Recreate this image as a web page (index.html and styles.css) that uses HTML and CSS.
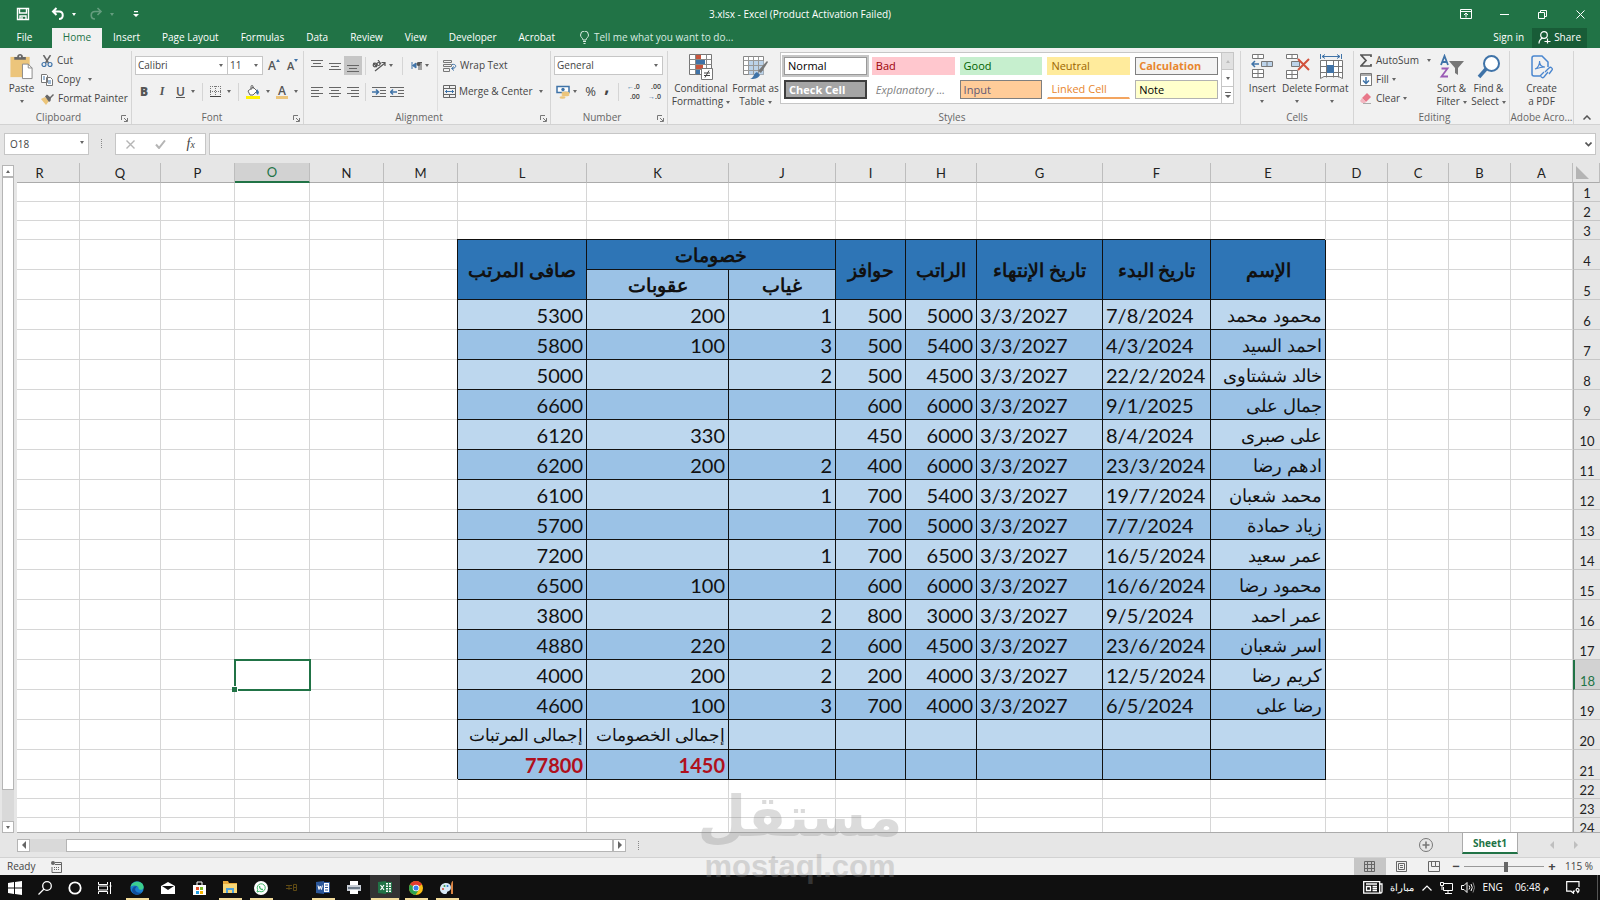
FILE: index.html
```html
<!DOCTYPE html>
<html lang="en">
  <head>
    <meta charset="UTF-8" />
    <meta name="viewport" content="width=device-width, initial-scale=1.0" />
    <title>3.xlsx - Excel</title>
    <link rel="stylesheet" href="styles.css">
  </head>
  <body>
    <!-- Title bar -->
    <header class="titlebar">
      <div class="quick">
        <button aria-label="Save"><svg width="14" height="14" viewBox="0 0 14 14" fill="none" stroke="#fff" stroke-width="1.4"><path d="M1.5 1.5h11v11h-11zM3.5 1.5v4.500h7V1.500M4 12.500V9h6v3.500M6 10v2.500"/></svg></button>
        <button class="undo" aria-label="Undo"><svg width="14" height="14" viewBox="0 0 14 14" fill="none" stroke="#fff" stroke-width="2"><path d="M5.500 1L2 4.500L5.500 8M2.500 4.500H8c5 0 5 7.500 0 7.500"/></svg><i class="caret"></i></button>
        <button class="redo" aria-label="Redo"><svg width="14" height="14" viewBox="0 0 14 14" fill="none" stroke="#fff" stroke-width="1.600"><path d="M8.500 1L12 4.500L8.500 8M11.500 4.500H6c-5 0-5 7.500 0 7.500"/></svg><i class="caret"></i></button>
        <button class="customize" aria-label="Customize toolbar"><svg width="6" height="7" viewBox="0 0 6 7"><path d="M1 0h4v1.200H1zM0 3h6L3 6z" fill="#fff"/></svg></button>
      </div>
      <h1>3.xlsx - Excel (Product Activation Failed)</h1>
      <div class="window-buttons">
        <button aria-label="Ribbon display options"><svg width="12" height="10" viewBox="0 0 12 10" fill="none" stroke="#fff"><path d="M.5.5h11v9H.5zM.5 2.500h11M6 8.500V4M4 6l2-2l2 2"/></svg></button>
        <button aria-label="Minimize"><svg width="9" height="9" viewBox="0 0 9 9" stroke="#fff"><path d="M0 4.500h9"/></svg></button>
        <button aria-label="Restore"><svg width="9" height="9" viewBox="0 0 9 9" fill="none" stroke="#fff"><path d="M.5 2.500h6v6h-6zM2.500 2V.5h6v6H7"/></svg></button>
        <button aria-label="Close"><svg width="9" height="9" viewBox="0 0 9 9" stroke="#fff"><path d="M.5.5l8 8M8.500.5l-8 8"/></svg></button>
      </div>
    </header>

    <!-- Ribbon tabs -->
    <nav class="tabs">
      <a href="#" class="file">File</a>
      <a href="#" class="active">Home</a>
      <a href="#">Insert</a>
      <a href="#">Page Layout</a>
      <a href="#">Formulas</a>
      <a href="#">Data</a>
      <a href="#">Review</a>
      <a href="#">View</a>
      <a href="#">Developer</a>
      <a href="#">Acrobat</a>
      <a href="#" class="tell"><svg width="9" height="13" viewBox="0 0 9 13" fill="none" stroke="#d8ebe0"><path d="M3 9c0-2-2.500-2.500-2.500-5a4 4 0 0 1 8 0C8.500 6.500 6 7 6 9zM3 10.500h3M3.500 12.500h2"/></svg>Tell me what you want to do...</a>
      <a href="#" class="signin">Sign in</a>
      <a href="#" class="share"><svg width="13" height="13" viewBox="0 0 13 13" fill="none" stroke="#fff" stroke-width="1.200"><circle cx="6" cy="4" r="3.300"/><path d="M1 12.500c0-3 1.500-4.500 3.500-5.500M6.500 10.500h6M9.500 7.500v5"/></svg>Share</a>
    </nav>

    <!-- Ribbon -->
    <section class="ribbon">
      <div class="group clipboard">
        <div class="tools">
          <button class="big paste"><svg width="25" height="27" viewBox="0 0 25 27"><path d="M1 3h20v21H1z" fill="#ecc57b"/><path d="M5 6V3h3c0-4 6-4 6 0h3v3z" fill="#666"/><circle cx="11" cy="2.500" r="1" fill="#f1f1f1"/><path d="M13.500 10.500h6l4 4v11h-10z" fill="#fff" stroke="#888"/><path d="M19.500 10.500v4h4" fill="none" stroke="#888"/></svg>Paste<i class="caret"></i></button>
          <div class="stack">
            <button><svg width="12" height="12" viewBox="0 0 12 12" fill="none"><path d="M2.500 0l5 8M9.500 0l-5 8" stroke="#666" stroke-width="1.500"/><circle cx="3" cy="9.500" r="2" stroke="#3f73a8" stroke-width="1.200"/><circle cx="9" cy="9.500" r="2" stroke="#3f73a8" stroke-width="1.200"/></svg>Cut</button>
            <button><svg width="12" height="12" viewBox="0 0 12 12" fill="#fff" stroke="#777"><path d="M.5.5h5l1 1v7h-6zM5.500 3.500h4l2 2v6h-6z"/><path d="M2 3h2M2 5h2M7 7h3M7 9h3" stroke="#3f73a8"/></svg>Copy<i class="caret wide"></i></button>
            <button><svg width="13" height="12" viewBox="0 0 13 12"><path d="M0 6l4-2l4 4l-3 4z" fill="#ecc57b"/><path d="M4 3.500l2-2l3 2.500l3-3l1 1l-3 3l-.500 3l-1.500 1z" fill="#666"/></svg>Format Painter</button>
          </div>
        </div>
        <div class="caption">Clipboard<svg class="launch"><use href="#launch"/></svg></div>
      </div>

      <div class="group font">
        <div class="tools column">
          <div class="line">
            <label class="combo font-name"><select aria-label="Font"><option>Calibri</option></select></label><label class="combo font-size"><select aria-label="Font size"><option>11</option></select></label>
            <button class="letter grow" aria-label="Increase font size">A<i class="up"></i></button>
            <button class="letter shrink" aria-label="Decrease font size">A<i class="down"></i></button>
          </div>
          <div class="line format">
            <button class="letter style"><b>B</b></button>
            <button class="letter style"><em>I</em></button>
            <button class="letter underline"><u>U</u><i class="caret"></i></button>
            <i class="sep"></i>
            <button aria-label="Borders"><svg width="11" height="11" viewBox="0 0 11 11" fill="none" stroke="#777"><path d="M.5 0v10M10.500 0v10M0 .5h11M5.500 0v10M0 5.500h11" stroke-dasharray="1 1"/><path d="M0 10.500h11" stroke="#444"/></svg><i class="caret"></i></button>
            <i class="sep"></i>
            <button aria-label="Fill color"><svg width="14" height="14" viewBox="0 0 14 14"><path d="M2 6l5-4l4 4l-4 4H4z" fill="#fff" stroke="#666"/><path d="M5 5V1.500a1 1 0 0 1 2 0V4" fill="none" stroke="#666"/><path d="M11 4l2 3l-1 3l-2-2z" fill="#3f73a8"/><path d="M0 11h14v3H0z" fill="#fff200"/></svg><i class="caret"></i></button>
            <button class="letter fontcolor" aria-label="Font color"><span>A</span><i class="caret"></i></button>
          </div>
        </div>
        <div class="caption">Font<svg class="launch"><use href="#launch"/></svg></div>
      </div>

      <div class="group alignment">
        <div class="tools">
          <div class="column aligns">
            <div class="line">
              <button aria-label="Top align"><svg class="bars"><path d="M0 .5h12M2 3.500h8M0 6.500h12"/></svg></button>
              <button aria-label="Middle align"><svg class="bars"><path d="M0 3.500h12M2 6.500h8M0 9.500h12"/></svg></button>
              <button class="pressed" aria-label="Bottom align"><svg class="bars"><path d="M0 5.500h12M2 8.500h8M0 11.500h12"/></svg></button>
              <i class="sep"></i>
              <button class="wide" aria-label="Orientation"><svg width="14" height="12" viewBox="0 0 14 12" fill="none" stroke="#555" stroke-width="1.200"><path d="M3 11L13 3M9.500 2.500H13V6"/><circle cx="3" cy="5" r="1.800"/><path d="M5 7L1.500 3M6 0l3 4"/><circle cx="6.500" cy="4" r="1.500"/></svg><i class="caret"></i></button>
              <i class="sep"></i>
              <button class="wide" aria-label="Text direction"><svg width="11" height="8" viewBox="0 0 11 8"><path d="M1 0v7M5 1v5L1.500 3.500z" stroke="#3f73a8" fill="#3f73a8"/><path d="M8 0v8M10 0v8M8 .5h3" stroke="#555"/><circle cx="7.500" cy="2" r="2" fill="#555"/></svg><i class="caret"></i></button>
            </div>
            <div class="line indents">
              <button aria-label="Align left"><svg class="bars"><path d="M0 1.500h12M0 4.500h8M0 7.500h12M0 10.500h8"/></svg></button>
              <button aria-label="Center"><svg class="bars"><path d="M0 1.500h12M2 4.500h8M0 7.500h12M2 10.500h8"/></svg></button>
              <button aria-label="Align right"><svg class="bars"><path d="M0 1.500h12M4 4.500h8M0 7.500h12M4 10.500h8"/></svg></button>
              <i class="sep"></i>
              <button aria-label="Decrease indent"><svg class="bars indent"><path d="M0 1.500h14M8 4.500h6M8 7.500h6M0 10.500h14"/><path d="M0 6h6M4 3.500L6.500 6L4 8.500" class="blue"/></svg></button>
              <button aria-label="Increase indent"><svg class="bars indent"><path d="M0 1.500h14M8 4.500h6M8 7.500h6M0 10.500h14"/><path d="M1 6h6M3 3.500L.5 6L3 8.500" class="blue"/></svg></button>
            </div>
          </div>
          <div class="column wraps">
            <button><svg width="14" height="14" viewBox="0 0 14 14" fill="none" stroke="#777"><path d="M.5 1.500h8v2h-8zM.5 5.500h8v2h-8zM.5 9.500h6v3h-6z"/><path d="M9 5.500c5-1 5 4 0 4M11 7.500L8.500 9.500L11 11.500" stroke="#3f73a8"/></svg>Wrap Text</button>
            <button><svg width="13" height="13" viewBox="0 0 13 13" fill="none" stroke="#666"><path d="M.5.5h12v12H.5zM.5 3.500h12M.5 9.500h12M6.500.5v3M6.500 9.500v3"/><path d="M2 6.500h9M4 5L2.500 6.500L4 8M9 5l1.500 1.500L9 8" stroke="#3f73a8"/></svg>Merge &amp; Center<i class="caret"></i></button>
          </div>
        </div>
        <div class="caption">Alignment<svg class="launch"><use href="#launch"/></svg></div>
      </div>

      <div class="group number">
        <div class="tools column">
          <div class="line"><label class="combo number-format"><select aria-label="Number format"><option>General</option></select></label></div>
          <div class="line spread">
            <button aria-label="Accounting format"><svg width="14" height="14" viewBox="0 0 14 14"><path d="M1 1.500h12v6H1z" fill="#fff" stroke="#3f73a8" stroke-width="1.500"/><circle cx="7" cy="4.500" r="1.700" fill="#3f73a8"/><ellipse cx="9.500" cy="8" rx="4" ry="1.500" fill="#ecc57b"/><ellipse cx="9.500" cy="10" rx="4" ry="1.300" fill="#ecc57b"/><ellipse cx="6.500" cy="12.500" rx="3" ry="1.300" fill="#ecc57b"/></svg><i class="caret"></i></button>
            <button class="percent">%</button>
            <button class="percent comma" aria-label="Comma style">,</button>
            <i class="sep"></i>
            <button class="decimals" aria-label="Increase decimal"><span><s>←</s>.0</span><span>.00</span></button>
            <button class="decimals" aria-label="Decrease decimal"><span>.00</span><span><s>→</s>.0</span></button>
          </div>
        </div>
        <div class="caption">Number<svg class="launch"><use href="#launch"/></svg></div>
      </div>

      <div class="group styles">
        <div class="tools">
          <button class="big condition"><svg width="25" height="26" viewBox="0 0 25 26"><path d="M.5.5h22v20H.5z" fill="#fff" stroke="#777"/><path d="M.5 5.500h22M.5 10.500h22M.5 15.500h22M6.500.5v20M17.500.5v20" stroke="#888"/><path d="M7 1h5v4H7zM7 11h7v4H7z" fill="#c8553d"/><path d="M7 6h9v4H7zM7 16h4v4H7z" fill="#3f73a8"/><path d="M12.500 14.500h11v11h-11z" fill="#fff" stroke="#777"/><path d="M15 19h6M15 21.500h6M20 16.500l-4 7" stroke="#444"/></svg><span>Conditional<br>Formatting<i class="caret"></i></span></button>
          <button class="big table-format"><svg width="26" height="26" viewBox="0 0 26 26"><path d="M.5 2.500h20v18H.5z" fill="#fff" stroke="#888"/><path d="M6 7h14.500v13.500H6z" fill="#bcd3ea"/><path d="M.5 6.500h20M.5 11.500h20M.5 16.500h20M5.500 2.500v18M10.500 2.500v18M15.500 2.500v18" stroke="#999"/><path d="M25 8l-7 11l-3-2l9-10z" fill="#777"/><path d="M14 18l3 3c-2 4-6 4-10 4c4-1 3-5 7-7z" fill="#3f73a8"/></svg><span>Format as<br>Table<i class="caret"></i></span></button>
          <div class="gallery">
            <div class="swatches">
              <button class="normal">Normal</button>
              <button class="bad">Bad</button>
              <button class="good">Good</button>
              <button class="neutral">Neutral</button>
              <button class="calculation">Calculation</button>
              <button class="check">Check Cell</button>
              <button class="explain">Explanatory ...</button>
              <button class="input">Input</button>
              <button class="linked">Linked Cell</button>
              <button class="note">Note</button>
            </div>
            <div class="gallery-scroll">
              <button class="off" aria-label="Previous styles"><i class="caret flip"></i></button>
              <button aria-label="Next styles"><i class="caret"></i></button>
              <button aria-label="More styles"><svg width="6" height="7" viewBox="0 0 6 7"><path d="M0 0h6v1H0zM0 3h6L3 6z" fill="#666"/></svg></button>
            </div>
          </div>
        </div>
        <div class="caption">Styles</div>
      </div>

      <div class="group cells">
        <div class="tools">
          <button class="big"><svg width="23" height="26" viewBox="0 0 23 26" fill="#fff" stroke="#777"><path d="M1.500.5h11v4h-11zM7 .5v4M1.500 15.500h11v8h-11zM7 15.500v8M1.500 19.500h11"/><path d="M10.500 7.500h11v5h-11z" fill="#bcd3ea"/><path d="M16 7.500v5"/><path d="M1 10h7M4 7l-3 3l3 3" stroke="#3f73a8" fill="none" stroke-width="1.500"/></svg>Insert<i class="caret"></i></button>
          <button class="big"><svg width="25" height="26" viewBox="0 0 25 26" fill="#fff" stroke="#777"><path d="M1.500.5h11v4h-11zM7 .5v4M1.500 16.500h11v8h-11zM7 16.500v8M1.500 20.500h11"/><path d="M6.500 7.500h8v5h-8z" fill="#bcd3ea"/><path d="M13 5l11 11M24 5L13 16" stroke="#d2523d" stroke-width="2"/></svg>Delete<i class="caret"></i></button>
          <button class="big"><svg width="24" height="26" viewBox="0 0 24 26" fill="#fff" stroke="#777"><path d="M.5 6.500h22v18l-4-2H4l-3.500 2zM.5 12.500h22M.5 18.500h22M6.500 6.500v17M13.500 6.500v17M18.500 6.500v17"/><path d="M7 11h7v8H7z" fill="#3f73a8" stroke="none"/><path d="M2 2.500h18M5 .5l-3 2l3 2M17 .5l3 2l-3 2M.5 0v5M21.500 0v5" fill="none" stroke="#3f73a8"/></svg>Format<i class="caret"></i></button>
        </div>
        <div class="caption">Cells</div>
      </div>

      <div class="group editing">
        <div class="tools">
          <div class="stack">
            <button><svg width="12" height="13" viewBox="0 0 12 13" fill="none" stroke="#555" stroke-width="1.700"><path d="M11 3V1H1l5 5.500L1 12h10v-2"/></svg>AutoSum<i class="caret wide"></i></button>
            <button><svg width="12" height="13" viewBox="0 0 12 13" fill="none"><path d="M.5.5h11v12H.5z" fill="#fff" stroke="#777"/><path d="M1 1h10v2H1z" fill="#aaa"/><path d="M6 4v6M3 7.500l3 3l3-3" stroke="#3f73a8" stroke-width="1.500"/></svg>Fill<i class="caret"></i></button>
            <button><svg width="12" height="11" viewBox="0 0 12 11"><path d="M7 0l4 4l-5 5l-4-4z" fill="#e8788a"/><path d="M2 5l4 4l-1 1H2L0 8z" fill="#f2b6c0"/><path d="M3 10.500h8" stroke="#aaa"/></svg>Clear<i class="caret"></i></button>
          </div>
          <button class="big"><svg width="26" height="26" viewBox="0 0 26 26" fill="none"><path d="M2 11L5.500 2L9 11M3 8h5" stroke="#3f73a8" stroke-width="1.800"/><path d="M2.500 14.500h6l-6 8h6.500" stroke="#9a5bb5" stroke-width="1.800"/><path d="M10 7h15l-6 7v7l-3-2v-5z" fill="#777"/></svg><span>Sort &amp;<br>Filter<i class="caret"></i></span></button>
          <button class="big"><svg width="24" height="26" viewBox="0 0 24 26" fill="none" stroke="#3f73a8"><circle cx="14.500" cy="9.500" r="7.500" fill="#fff" stroke-width="2"/><path d="M9 15l-7 8" stroke-width="3.500"/></svg><span>Find &amp;<br>Select<i class="caret"></i></span></button>
        </div>
        <div class="caption">Editing</div>
      </div>

      <div class="group adobe">
        <div class="tools">
          <button class="big"><svg width="22" height="26" viewBox="0 0 22 26" fill="none" stroke="#4a86cf" stroke-width="1.500"><path d="M9 22H3a2 2 0 0 1-2-2V4a2 2 0 0 1 2-2h8l6 6v5"/><path d="M4 15c3-1 5-5 4.500-8c0 4 2 6 5.500 6c-4 0-7 1-10 2z" stroke-width="1.200"/><path d="M14 18l4-4c2-2 4 1 3 2l-3 4M17 18l-4 5c-2 2-4-1-3-2l3-3" stroke-width="1.300"/></svg><span>Create<br>a PDF</span></button>
        </div>
        <div class="caption">Adobe Acro...</div>
      </div>
      <button class="collapse" aria-label="Collapse ribbon"><svg width="8" height="5" viewBox="0 0 8 5" fill="none" stroke="#555" stroke-width="1.500"><path d="M.5 4.500L4 1l3.500 3.500"/></svg></button>
    </section>

    <!-- Formula bar -->
    <section class="formula">
      <label class="combo name-box"><input type="text" value="O18" aria-label="Name box"></label>
      <i class="grip"></i>
      <div class="formula-buttons">
        <button aria-label="Cancel"><svg width="9" height="9" viewBox="0 0 9 9" stroke="#b5b5b5" stroke-width="1.400"><path d="M.5.5l8 8M8.500.5l-8 8"/></svg></button>
        <button aria-label="Enter"><svg width="11" height="9" viewBox="0 0 11 9" fill="none" stroke="#b5b5b5" stroke-width="2"><path d="M1 4.500L4 8l6-7.500"/></svg></button>
        <button class="fx" aria-label="Insert function">f<sub>x</sub></button>
      </div>
      <div class="formula-input"><input type="text" aria-label="Formula"><svg width="7" height="5" viewBox="0 0 7 5" fill="none" stroke="#555" stroke-width="1.600"><path d="M.5.5l3 3l3-3"/></svg></div>
    </section>

    <!-- Worksheet -->
    <main class="sheet">
      <div class="vscroll">
        <button aria-label="Scroll up"><i class="caret flip"></i></button>
        <div class="thumb"></div>
        <div class="track"></div>
        <button aria-label="Scroll down"><i class="caret"></i></button>
      </div>
      <div class="grid">
        <table>
          <colgroup>
            <col><col class="w81"><col class="w74"><col class="w75"><col class="w74"><col class="w74"><col class="w129"><col class="w142"><col class="w107"><col class="w70"><col class="w71"><col class="w126"><col class="w108"><col class="w115"><col class="w62"><col class="w61"><col class="w62"><col class="w62"><col class="w27">
          </colgroup>
          <thead>
            <tr><th>R</th><th>Q</th><th>P</th><th class="current">O</th><th>N</th><th>M</th><th>L</th><th>K</th><th>J</th><th>I</th><th>H</th><th>G</th><th>F</th><th>E</th><th>D</th><th>C</th><th>B</th><th>A</th><th class="corner"><svg width="13" height="13" viewBox="0 0 13 13"><path d="M0 0v13h13z" fill="#b4b4b4"/></svg></th></tr>
          </thead>
          <tbody>
            <tr><td></td><td></td><td></td><td></td><td></td><td></td><td></td><td></td><td></td><td></td><td></td><td></td><td></td><td></td><td></td><td></td><td></td><td></td><th>1</th></tr>
            <tr><td></td><td></td><td></td><td></td><td></td><td></td><td></td><td></td><td></td><td></td><td></td><td></td><td></td><td></td><td></td><td></td><td></td><td></td><th>2</th></tr>
            <tr><td></td><td></td><td></td><td></td><td></td><td></td><td></td><td></td><td></td><td></td><td></td><td></td><td></td><td></td><td></td><td></td><td></td><td></td><th>3</th></tr>
            <!-- Table header -->
            <tr class="tall">
              <td></td><td></td><td></td><td></td><td></td><td></td>
              <td class="head" rowspan="2">صافى المرتب</td><td class="head" colspan="2">خصومات</td><td class="head" rowspan="2">حوافز</td><td class="head" rowspan="2">الراتب</td><td class="head" rowspan="2">تاريخ الإنتهاء</td><td class="head" rowspan="2">تاريخ البدء</td><td class="head" rowspan="2">الإسم</td>
              <td></td><td></td><td></td><td></td><th>4</th>
            </tr>
            <tr class="tall">
              <td></td><td></td><td></td><td></td><td></td><td></td>
              <td class="head sub">عقوبات</td><td class="head sub">غياب</td>
              <td></td><td></td><td></td><td></td><th>5</th>
            </tr>
            <!-- Employees -->
            <tr class="tall row"><td></td><td></td><td></td><td></td><td></td><td></td><td>5300</td><td>200</td><td>1</td><td>500</td><td>5000</td><td>3/3/2027</td><td>7/8/2024</td><td>محمود محمد</td><td></td><td></td><td></td><td></td><th>6</th></tr>
            <tr class="tall row dark"><td></td><td></td><td></td><td></td><td></td><td></td><td>5800</td><td>100</td><td>3</td><td>500</td><td>5400</td><td>3/3/2027</td><td>4/3/2024</td><td>احمد السيد</td><td></td><td></td><td></td><td></td><th>7</th></tr>
            <tr class="tall row"><td></td><td></td><td></td><td></td><td></td><td></td><td>5000</td><td></td><td>2</td><td>500</td><td>4500</td><td>3/3/2027</td><td>22/2/2024</td><td>خالد ششتاوى</td><td></td><td></td><td></td><td></td><th>8</th></tr>
            <tr class="tall row dark"><td></td><td></td><td></td><td></td><td></td><td></td><td>6600</td><td></td><td></td><td>600</td><td>6000</td><td>3/3/2027</td><td>9/1/2025</td><td>جمال على</td><td></td><td></td><td></td><td></td><th>9</th></tr>
            <tr class="tall row"><td></td><td></td><td></td><td></td><td></td><td></td><td>6120</td><td>330</td><td></td><td>450</td><td>6000</td><td>3/3/2027</td><td>8/4/2024</td><td>على صبرى</td><td></td><td></td><td></td><td></td><th>10</th></tr>
            <tr class="tall row dark"><td></td><td></td><td></td><td></td><td></td><td></td><td>6200</td><td>200</td><td>2</td><td>400</td><td>6000</td><td>3/3/2027</td><td>23/3/2024</td><td>ادهم رضا</td><td></td><td></td><td></td><td></td><th>11</th></tr>
            <tr class="tall row"><td></td><td></td><td></td><td></td><td></td><td></td><td>6100</td><td></td><td>1</td><td>700</td><td>5400</td><td>3/3/2027</td><td>19/7/2024</td><td>محمد شعبان</td><td></td><td></td><td></td><td></td><th>12</th></tr>
            <tr class="tall row dark"><td></td><td></td><td></td><td></td><td></td><td></td><td>5700</td><td></td><td></td><td>700</td><td>5000</td><td>3/3/2027</td><td>7/7/2024</td><td>زياد حمادة</td><td></td><td></td><td></td><td></td><th>13</th></tr>
            <tr class="tall row"><td></td><td></td><td></td><td></td><td></td><td></td><td>7200</td><td></td><td>1</td><td>700</td><td>6500</td><td>3/3/2027</td><td>16/5/2024</td><td>عمر سعيد</td><td></td><td></td><td></td><td></td><th>14</th></tr>
            <tr class="tall row dark"><td></td><td></td><td></td><td></td><td></td><td></td><td>6500</td><td>100</td><td></td><td>600</td><td>6000</td><td>3/3/2027</td><td>16/6/2024</td><td>محمود رضا</td><td></td><td></td><td></td><td></td><th>15</th></tr>
            <tr class="tall row"><td></td><td></td><td></td><td></td><td></td><td></td><td>3800</td><td></td><td>2</td><td>800</td><td>3000</td><td>3/3/2027</td><td>9/5/2024</td><td>عمر احمد</td><td></td><td></td><td></td><td></td><th>16</th></tr>
            <tr class="tall row dark"><td></td><td></td><td></td><td></td><td></td><td></td><td>4880</td><td>220</td><td>2</td><td>600</td><td>4500</td><td>3/3/2027</td><td>23/6/2024</td><td>اسر شعبان</td><td></td><td></td><td></td><td></td><th>17</th></tr>
            <tr class="tall row"><td></td><td></td><td></td><td class="selected"></td><td></td><td></td><td>4000</td><td>200</td><td>2</td><td>200</td><td>4000</td><td>3/3/2027</td><td>12/5/2024</td><td>كريم رضا</td><td></td><td></td><td></td><td></td><th class="current">18</th></tr>
            <tr class="tall row dark"><td></td><td></td><td></td><td></td><td></td><td></td><td>4600</td><td>100</td><td>3</td><td>700</td><td>4000</td><td>3/3/2027</td><td>6/5/2024</td><td>رضا على</td><td></td><td></td><td></td><td></td><th>19</th></tr>
            <!-- Totals -->
            <tr class="tall row labels"><td></td><td></td><td></td><td></td><td></td><td></td><td>إجمالى المرتبات</td><td>إجمالى الخصومات</td><td></td><td></td><td></td><td></td><td></td><td></td><td></td><td></td><td></td><td></td><th>20</th></tr>
            <tr class="tall row dark total"><td></td><td></td><td></td><td></td><td></td><td></td><td>77800</td><td>1450</td><td></td><td></td><td></td><td></td><td></td><td></td><td></td><td></td><td></td><td></td><th>21</th></tr>
            <tr><td></td><td></td><td></td><td></td><td></td><td></td><td></td><td></td><td></td><td></td><td></td><td></td><td></td><td></td><td></td><td></td><td></td><td></td><th>22</th></tr>
            <tr><td></td><td></td><td></td><td></td><td></td><td></td><td></td><td></td><td></td><td></td><td></td><td></td><td></td><td></td><td></td><td></td><td></td><td></td><th>23</th></tr>
            <tr><td></td><td></td><td></td><td></td><td></td><td></td><td></td><td></td><td></td><td></td><td></td><td></td><td></td><td></td><td></td><td></td><td></td><td></td><th>24</th></tr>
          </tbody>
        </table>
      </div>
    </main>

    <!-- Sheet tabs -->
    <div class="sheetbar">
      <div class="hscroll">
        <button aria-label="Scroll left"><i class="caret left"></i></button>
        <div class="thumb"></div>
        <button aria-label="Scroll right"><i class="caret right"></i></button>
      </div>
      <i class="grip"></i>
      <button class="add" aria-label="New sheet"><svg width="14" height="14" viewBox="0 0 14 14" fill="none" stroke="#777"><circle cx="7" cy="7" r="6.500"/><path d="M7 3.500v7M3.500 7h7" stroke-width="1.600"/></svg></button>
      <a href="#" class="sheet-tab">Sheet1</a>
      <div class="sheet-arrows"><i class="caret left"></i><i class="caret right"></i></div>
    </div>

    <!-- Status bar -->
    <footer class="status">
      <span>Ready</span>
      <svg width="11" height="12" viewBox="0 0 11 12" fill="none" stroke="#666"><path d="M4 1.500h6.500v10H1V6M4 3.500h6.500" /><path d="M3 6.500h6M3 8.500h6" stroke-dasharray="1 1"/><circle cx="2" cy="2" r="2" fill="#666" stroke="none"/></svg>
      <div class="views">
        <button class="on" aria-label="Normal view"><svg width="11" height="11" viewBox="0 0 11 11" fill="none" stroke="#666"><path d="M.5.5h10v10H.5zM.5 3.500h10M.5 7.500h10M3.500.5v10M7.500.5v10"/></svg></button>
        <button aria-label="Page layout view"><svg width="11" height="11" viewBox="0 0 11 11" fill="none" stroke="#666"><path d="M.5.5h10v10H.5zM2.500 2.500h6v6h-6zM4 4.500h3M4 6.500h3"/></svg></button>
        <button aria-label="Page break view"><svg width="12" height="11" viewBox="0 0 12 11" fill="none" stroke="#666"><path d="M.5.5h11v10H.5zM3.500.5v5h4v-5M7.500 5.500h4"/></svg></button>
      </div>
      <div class="zoom">
        <button aria-label="Zoom out">−</button>
        <input type="range" min="0" max="100" value="53" aria-label="Zoom">
        <button aria-label="Zoom in">+</button>
      </div>
      <span class="percent-text">115 %</span>
    </footer>

    <!-- Taskbar -->
    <nav class="taskbar">
      <div class="system">
        <button aria-label="Start"><svg width="14" height="14" viewBox="0 0 14 14" fill="#fff"><path d="M0 2l6-1v5.500H0zM7 1l7-1v6.500H7zM0 7.500h6V13l-6-1zM7 7.500h7V14l-7-1z"/></svg></button>
        <button aria-label="Search"><svg width="14" height="14" viewBox="0 0 14 14" fill="none" stroke="#fff" stroke-width="1.300"><circle cx="9" cy="5" r="4.300"/><path d="M6 8l-5.500 5.500"/></svg></button>
        <button aria-label="Cortana"><svg width="14" height="14" viewBox="0 0 14 14" fill="none" stroke="#fff" stroke-width="1.800"><circle cx="7" cy="7" r="5.700"/></svg></button>
        <button aria-label="Task view"><svg width="14" height="12" viewBox="0 0 14 12" fill="none" stroke="#fff"><path d="M.5 0v2.500h9V0M.5 12V9.500h9V12M.5 4v4h9V4zM12.500 0v12M11.500 4h2"/></svg></button>
      </div>
      <div class="apps">
        <button class="open" aria-label="Edge"><svg width="14" height="14" viewBox="0 0 14 14"><circle cx="7" cy="7" r="6.700" fill="#1b7fd0"/><path d="M.5 6C2-1 13-1 13.700 6c0 3-4 3.500-5 2C9 4 3 3.500.5 6z" fill="#3ccf8e"/><path d="M7 5.500c-4 3-1 7 4.500 6c-4 4-9 2-9.500-2c0-3 3-5 5-4z" fill="#124e9c"/></svg></button>
        <button aria-label="Mail"><svg width="14" height="12" viewBox="0 0 14 12"><path d="M0 4l7-4l7 4v8H0z" fill="#fff"/><path d="M1 4h12L7 8z" fill="#111"/></svg></button>
        <button aria-label="Store"><svg width="13" height="14" viewBox="0 0 13 14"><path d="M0 4h13v10H0z" fill="#fff"/><path d="M4 4V1h5v3" fill="none" stroke="#fff"/><path d="M3 6h3v3H3z" fill="#e5502b"/><path d="M7 6h3v3H7z" fill="#7cb928"/><path d="M3 10h3v3H3z" fill="#1f9fe6"/><path d="M7 10h3v3H7z" fill="#f7b500"/></svg></button>
        <button class="open" aria-label="File Explorer"><svg width="14" height="13" viewBox="0 0 14 13"><path d="M0 0h5l1 2h8v10H0z" fill="#e9ab3c"/><path d="M0 3h14v9H0z" fill="#f7d777"/><path d="M3 7h8v5H9V9H5v3H3z" fill="#4fa3dd"/></svg></button>
        <button class="open" aria-label="WhatsApp"><svg width="14" height="14" viewBox="0 0 14 14" fill="none"><circle cx="7" cy="7" r="7" fill="#fff"/><path d="M3 11l.7-2.300a4 4 0 1 1 1.600 1.600z" stroke="#45b96c"/><path d="M5.500 5c0 2 1.500 3.500 3.500 3.500" stroke="#45b96c" stroke-width="1.300"/></svg></button>
        <button aria-label="Player"><svg width="12" height="9" viewBox="0 0 12 9" fill="none" stroke="#5f4a14"><path d="M0 2.500h6M0 5.500h6M3 2v5M7.500 1.500h3v6h-3zM7.500 4.500h3"/></svg></button>
        <button class="open" aria-label="Word"><svg width="14" height="13" viewBox="0 0 14 13"><path d="M7 1.500h6.500v10H7z" fill="#fff" stroke="#2b579a"/><path d="M9 4h3M9 6.500h3M9 9h3" stroke="#2b579a"/><path d="M0 1l8-1v13l-8-1z" fill="#2b579a"/><path d="M2 4.500l1 4l1.200-3.500l1.200 3.500l1-4" fill="none" stroke="#fff"/></svg></button>
        <button aria-label="Printer"><svg width="14" height="13" viewBox="0 0 14 13"><path d="M3 0h8v5H3z" fill="#fff"/><path d="M0 4h14v6H0z" fill="#c8ced6"/><path d="M1 6h12v2H1z" fill="#6d7a88"/><path d="M3 9h8v4H3z" fill="#fff"/></svg></button>
        <button class="open focused" aria-label="Excel"><svg width="14" height="13" viewBox="0 0 14 13"><path d="M7 1.500h6.500v10H7z" fill="#fff" stroke="#217346"/><path d="M8 4h5M8 6.500h5M8 9h5M10.500 2v9" stroke="#217346"/><path d="M0 1l8-1v13l-8-1z" fill="#217346"/><path d="M2.500 4l3.500 5M6 4L2.500 9" stroke="#fff" stroke-width="1.200"/></svg></button>
        <button class="open" aria-label="Chrome"><svg width="14" height="14" viewBox="0 0 14 14"><circle cx="7" cy="7" r="7" fill="#fbc116"/><path d="M7 7L1 3.400A7 7 0 0 1 13 3.600z" fill="#e33b2e"/><path d="M7 7L1 3.400A7 7 0 0 0 6.500 14L10 8.500z" fill="#2da44f"/><circle cx="7" cy="7" r="3.300" fill="#fff"/><circle cx="7" cy="7" r="2.500" fill="#3b7ded"/></svg></button>
        <button class="open" aria-label="Paint"><svg width="14" height="14" viewBox="0 0 14 14"><path d="M6 2c6 0 6 7 3 8c-2 .5-2 1-2 2c-1 2-7 1-7-4c0-4 3-6 6-6z" fill="#d8e9f5"/><circle cx="3" cy="8" r="1" fill="#d9472b"/><circle cx="4.500" cy="5" r="1" fill="#3d9b46"/><circle cx="7.500" cy="5" r="1" fill="#2c78c9"/><path d="M11 4c0-2 1-4 2-4v13h-2z" fill="#d98444"/></svg></button>
      </div>
      <div class="tray">
        <button class="news"><svg width="20" height="13" viewBox="0 0 20 13" fill="none" stroke="#fff" stroke-width="1.300"><path d="M.7.7h16v11.500H.7zM17 3h2v7.500c0 2-2 2-2 0M3.500 5.500h4v4h-4zM3 3h11M9.500 5.500H14M9.500 7.500H14M9.500 9.500H14"/></svg>مباراة</button>
        <button aria-label="Hidden icons"><svg width="10" height="6" viewBox="0 0 10 6" fill="none" stroke="#fff" stroke-width="1.200"><path d="M.5 5.500L5 1l4.500 4.500"/></svg></button>
        <button aria-label="Network"><svg width="13" height="12" viewBox="0 0 13 12" fill="none" stroke="#fff"><path d="M4 1.500h8.500v7H3.500V5M5 11.500h7M8 8.500v3M.5.5h3v3h-3zM2 3.500V8"/></svg></button>
        <button aria-label="Volume"><svg width="14" height="11" viewBox="0 0 14 11" fill="none" stroke="#fff"><path d="M.5 3.500H3l3-3v10l-3-3H.5zM8 3.500q1.500 2 0 4M10 2q2.500 3.500 0 7"/><path d="M12 .5q3 5 0 10" stroke="#888"/></svg></button>
        <span>ENG</span>
        <time>06:48 م</time>
        <button aria-label="Notifications"><svg width="14" height="13" viewBox="0 0 14 13" fill="none" stroke="#fff" stroke-width="1.200"><path d="M13 6V.7H.7v9.500H5l2.500 2v-2H9"/><path d="M13 9.500a1.500 1.500 0 1 1-1-2c1.500.5 1.500 4-1 4.500"/></svg></button>
      </div>
    </nav>

    <div class="watermark"><strong>مستقل</strong><span>mostaql.com</span></div>

    <svg class="symbols">
      <symbol id="launch" viewBox="0 0 7 7"><path d="M.5 5V.5H5M3 3l3 3M6.500 3v3.500H3" fill="none" stroke="#777"/></symbol>
    </svg>
  </body>
</html>
```
FILE: styles.css
```css
* {
  box-sizing: border-box;
}

body {
  margin: 0;
  height: 100vh;
  display: flex;
  flex-direction: column;
  overflow: hidden;
  background-color: #e6e6e6;
  color: #444;
  font-family: "Open Sans", "Noto Sans", sans-serif;
  font-size: 10px;
  line-height: 13px;
}

button,
input,
select {
  font: inherit;
  color: inherit;
  background: none;
  border: 0;
  padding: 0;
  margin: 0;
}

button {
  display: flex;
  align-items: center;
  justify-content: center;
  white-space: nowrap;
}

a {
  color: inherit;
  text-decoration: none;
}

svg {
  flex: none;
}

.symbols {
  display: none;
}

.caret {
  display: inline-block;
  flex: none;
  margin-left: 3px;
  border: 2px solid transparent;
  border-top: 3px solid #666;
  border-bottom: 0;
  vertical-align: middle;
}

.caret.wide {
  margin-left: 8px;
}

.caret.flip {
  transform: rotate(180deg);
}

.caret.left,
.caret.right {
  border: 4px solid transparent;
}

.caret.left {
  border-right-color: #666;
  border-left: 0;
}

.caret.right {
  border-left-color: #666;
  border-right: 0;
}

/* Title bar */
.titlebar {
  display: grid;
  grid-template-columns: 1fr auto 1fr;
  align-items: center;
  height: 28px;
  background-color: #217346;
  color: #fff;
}

.titlebar h1 {
  margin: 0;
  font-size: 10px;
  font-weight: 400;
}

.quick,
.window-buttons {
  display: flex;
  align-items: center;
  height: 26px;
}

.quick {
  padding-left: 16px;
}

.quick .caret {
  border-top-color: #fff;
  margin-left: 7px;
}

.undo {
  margin-left: 21px;
}

.redo {
  margin-left: 13px;
  opacity: 0.3;
}

.customize {
  margin-left: 19px;
}

.window-buttons {
  justify-content: flex-end;
  padding-right: 1px;
}

.window-buttons button {
  width: 38px;
}

/* Tabs */
.tabs {
  display: flex;
  height: 20px;
  background-color: #217346;
  color: #fff;
}

.tabs a {
  display: flex;
  align-items: center;
  padding: 0 11px 1px;
}

.tabs .file {
  width: 52px;
  justify-content: center;
  padding-right: 14px;
}

.tabs .active {
  width: 50px;
  justify-content: center;
  padding: 0 0 1px;
  background-color: #f1f1f1;
  color: #217346;
}

.tabs .tell {
  gap: 5px;
  padding-left: 14px;
  color: #d8ebe0;
}

.tabs .signin {
  margin-left: auto;
  padding: 0 8px 1px;
}

.tabs .share {
  gap: 3px;
  padding: 0 6px 1px;
  margin-right: 13px;
  background-color: #185c37;
}

/* Ribbon */
.ribbon {
  display: flex;
  height: 77px;
  background-color: #f1f1f1;
  border-bottom: 1px solid #d2d2d2;
}

.group {
  display: flex;
  flex-direction: column;
  flex: none;
  margin-top: 3px;
  border-right: 1px solid #d5d5d5;
}

.tools {
  display: flex;
  flex: 1;
}

.column {
  display: flex;
  flex-direction: column;
  gap: 7px;
  padding-top: 5px;
}

.line {
  display: flex;
  align-items: center;
  height: 19px;
}

.caption {
  display: flex;
  align-items: center;
  justify-content: center;
  height: 13px;
  color: #666;
  position: relative;
  font-size: 10px;
}

.launch {
  position: absolute;
  right: 3px;
  top: 4px;
  width: 7px;
  height: 7px;
}

.big {
  flex-direction: column;
  justify-content: flex-start;
  padding-top: 3px;
  text-align: center;
}

.big > svg {
  height: 26px;
  margin-bottom: 2px;
}

.big > .caret {
  margin: 5px 0 0;
}

.stack {
  display: flex;
  flex-direction: column;
  align-items: flex-start;
}

.stack button {
  height: 19px;
}

.stack button svg {
  margin-right: 4px;
}

.sep {
  width: 1px;
  height: 18px;
  background-color: #d5d5d5;
}

.combo {
  display: flex;
  position: relative;
  height: 19px;
  background-color: #fff;
  border: 1px solid #c6c6c6;
}

.combo::after {
  content: "";
  position: absolute;
  right: 4px;
  top: 7px;
  border: 2px solid transparent;
  border-top: 3px solid #666;
  border-bottom: 0;
}

.combo select {
  width: 100%;
  padding-left: 2px;
  appearance: none;
}

.clipboard {
  width: 132px;
}

.clipboard .caption {
  padding-right: 14px;
}

.paste {
  width: 41px;
  padding-left: 2px;
}

.font {
  width: 172px;
  padding-left: 3px;
}

.font .caption {
  padding-right: 14px;
}

.font-name {
  width: 93px;
}

.font-size {
  width: 36px;
  margin-left: -1px;
}

.letter {
  font-size: 12px;
  font-weight: 600;
  color: #555;
}

.grow {
  margin-left: 5px;
}

.shrink {
  margin-left: 7px;
  font-size: 11px;
}

.up,
.down {
  align-self: flex-start;
  border: 2px solid transparent;
}

.up {
  border-bottom: 3px solid #3f73a8;
  border-top: 0;
}

.down {
  border-top: 3px solid #3f73a8;
  border-bottom: 0;
}

.format .style {
  width: 18px;
}

.format .underline {
  padding-left: 5px;
}

.format .sep {
  margin: 0 7px;
}

.format .caret {
  margin-left: 6px;
}

.format em {
  font-family: "Liberation Serif", serif;
}

.fontcolor {
  margin-left: 6px;
}

.fontcolor span {
  width: 12px;
  height: 14px;
  line-height: 12px;
  border-bottom: 3px solid #ecc57b;
}

.alignment {
  width: 247px;
  padding-left: 4px;
}

.alignment .caption {
  padding-right: 20px;
}

.aligns {
  width: 129px;
}

.aligns .line button {
  width: 18px;
  height: 19px;
}

.aligns .line .wide {
  width: 34px;
}

.aligns .line .pressed {
  background-color: #c6c6c6;
}

.aligns .sep {
  margin-left: 3px;
}

.aligns .indents .sep {
  margin-right: 4px;
}

.wraps {
  border-left: 1px solid #dedede;
  padding-left: 5px;
}

.wraps button {
  height: 19px;
  gap: 3px;
  justify-content: flex-start;
}

.bars {
  width: 12px;
  height: 12px;
  fill: none;
  stroke: #666;
}

.bars.indent {
  width: 14px;
}

.bars .blue {
  stroke: #3f73a8;
  stroke-width: 1.5;
}

.number {
  width: 117px;
  padding: 0 4px 0 3px;
}

.number .caption {
  margin: 0 -4px 0 -3px;
  padding-right: 14px;
}

.number-format {
  width: 109px;
}

.spread {
  justify-content: space-between;
  padding: 0 2px;
}

.percent {
  font-size: 13px;
}

.comma {
  height: 24px;
  align-items: flex-start;
  font-size: 18px;
  font-weight: 700;
  line-height: 12px;
}

.decimals {
  flex-direction: column;
  align-items: flex-end;
  font-size: 7px;
  font-weight: 600;
  line-height: 10px;
}

.decimals s {
  color: #3f73a8;
  text-decoration: none;
}

.styles {
  flex: 1;
}

.styles .caption {
  padding-right: 4px;
}

.condition {
  width: 66px;
}

.table-format {
  width: 43px;
}

.gallery {
  display: flex;
  flex: 1;
  height: 52px;
  margin: 1px 6px 0 3px;
  background-color: #fff;
  border: 1px solid #c6c6c6;
}

.swatches {
  display: grid;
  flex: 1;
  grid-template-columns: repeat(5, 1fr);
  gap: 5px;
  padding: 4px 3px;
}

.swatches button {
  justify-content: flex-start;
  padding-left: 3px;
  font-size: 11px;
  border: 1px solid transparent;
}

.swatches .normal {
  color: #000;
  border-color: #999;
  outline: 2px solid #c6c6c6;
}

.swatches .bad {
  background-color: #ffc7ce;
  color: #9c0006;
}

.swatches .good {
  background-color: #c6efce;
  color: #006100;
}

.swatches .neutral {
  background-color: #ffeb9c;
  color: #9c6500;
}

.swatches .calculation {
  background-color: #f2f2f2;
  border-color: #7f7f7f;
  color: #e8862e;
  font-weight: 700;
}

.swatches .check {
  background-color: #a5a5a5;
  border: 2px double #3f3f3f;
  color: #fff;
  font-weight: 700;
}

.swatches .explain {
  color: #7f7f7f;
  font-style: italic;
}

.swatches .input {
  background-color: #ffcc99;
  border-color: #7f7f7f;
  color: #5f5a76;
}

.swatches .linked {
  border-bottom: 2px solid #f3a560;
  color: #e8862e;
}

.swatches .note {
  background-color: #ffffcc;
  border-color: #b2b2b2;
  color: #000;
}

.gallery-scroll {
  display: flex;
  flex-direction: column;
  width: 12px;
}

.gallery-scroll button {
  flex: 1;
  border-left: 1px solid #c6c6c6;
  border-bottom: 1px solid #c6c6c6;
}

.gallery-scroll button:last-child {
  border-bottom: 0;
}

.gallery-scroll .off {
  background-color: #e1e1e1;
}

.gallery-scroll .off .caret {
  opacity: 0.3;
}

.gallery-scroll .caret {
  margin: 0;
}

.cells {
  width: 113px;
  padding: 0 4px;
}

.cells .big {
  width: 35px;
}

.editing {
  width: 156px;
  padding-left: 6px;
}

.editing .stack {
  width: 73px;
}

.editing .big {
  width: 37px;
}

.adobe {
  width: 64px;
}

.adobe .tools {
  justify-content: center;
}

.collapse {
  width: 26px;
  align-self: flex-end;
  height: 14px;
}

/* Formula bar */
.formula {
  display: flex;
  height: 38px;
  padding: 8px 4px;
}

.formula .combo,
.formula-buttons,
.formula-input {
  height: 22px;
  background-color: #fff;
  border: 1px solid #c6c6c6;
}

.formula .name-box {
  width: 85px;
}

.name-box input {
  width: 100%;
  padding-left: 5px;
}

.grip {
  width: 2px;
  height: 9px;
  border-left: 1px dotted #888;
}

.formula .grip {
  margin: 6px 12px;
}

.formula-buttons {
  display: flex;
  justify-content: space-around;
  width: 91px;
}

.fx {
  font: italic 14px "Liberation Serif", serif;
}

.fx sub {
  font-size: 10px;
}

.formula-input {
  display: flex;
  flex: 1;
  align-items: center;
  margin-left: 3px;
  padding-right: 3px;
}

.formula-input input {
  flex: 1;
}

/* Worksheet */
.sheet {
  display: flex;
  flex: 1;
  min-height: 0;
}

.vscroll {
  display: flex;
  flex-direction: column;
  width: 12px;
  margin: 2px 3px 0 2px;
  background-color: #d9d9d9;
}

.vscroll button,
.vscroll .thumb,
.hscroll button,
.hscroll .thumb {
  background-color: #fff;
  border: 1px solid #b5b5b5;
}

.vscroll button,
.hscroll button {
  width: 12px;
  height: 12px;
}

.vscroll .caret,
.hscroll .caret {
  margin: 0;
}

.vscroll .thumb {
  flex: 20;
}

.vscroll .track {
  flex: 1;
}

.grid {
  display: flex;
  flex: 1;
  justify-content: flex-end;
  overflow: hidden;
  border-bottom: 1px solid #ababab;
}

/* The first column is scrolled half out of view */
table {
  flex: none;
  width: calc(100% + 17px);
  table-layout: fixed;
  border-spacing: 0;
  font-family: Lato, "Noto Sans", sans-serif;
}

.w27 { width: 27px; }
.w61 { width: 61px; }
.w62 { width: 62px; }
.w70 { width: 70px; }
.w71 { width: 71px; }
.w74 { width: 74px; }
.w75 { width: 75px; }
.w81 { width: 81px; }
.w107 { width: 107px; }
.w108 { width: 108px; }
.w115 { width: 115px; }
.w126 { width: 126px; }
.w129 { width: 129px; }
.w142 { width: 142px; }

th {
  height: 19px;
  padding: 0;
  border-right: 1px solid #bdbdbd;
  border-bottom: 1px solid #ababab;
  font-size: 13px;
  font-weight: 400;
  line-height: 16px;
  color: #222;
}

thead th {
  height: 20px;
}

th.current {
  background-color: #d2d2d2;
  border-bottom: 2px solid #217346;
  color: #217346;
}

.corner svg {
  display: block;
  margin-left: 3px;
}

tbody th {
  border-right: 0;
  border-bottom-color: #c6c6c6;
  border-left: 1px solid #ababab;
  vertical-align: bottom;
}

tbody th.current {
  border-bottom: 1px solid #ababab;
  border-left: 2px solid #217346;
}

td {
  height: 19px;
  padding: 0 3px;
  background-color: #fff;
  border-right: 1px solid #d6d6d6;
  border-bottom: 1px solid #d6d6d6;
  font-size: 20px;
  line-height: 24px;
  text-align: right;
  white-space: nowrap;
  color: #111;
}

.tall td {
  height: 30px;
}

td.head,
.row td:nth-child(n + 7):nth-child(-n + 14) {
  border-color: #111;
  box-shadow: -1px -1px 0 #111;
}

td.head {
  position: relative;
  background-color: #2e75b6;
  font-size: 19px;
  font-weight: 700;
  text-align: center;
}

td.sub {
  background-color: #9bc2e6;
}

.row td:nth-child(n + 7):nth-child(-n + 14) {
  background-color: #bdd7ee;
}

.row.dark td:nth-child(n + 7):nth-child(-n + 14) {
  background-color: #9bc2e6;
}

.row td:nth-child(12),
.row td:nth-child(13) {
  text-align: left;
}

.row td:nth-child(14) {
  font-size: 18px;
}

.labels td {
  font-size: 17px;
}

.total td {
  font-weight: 700;
  color: #b0101c;
}

td.selected {
  position: relative;
  outline: 2px solid #217346;
  outline-offset: -1px;
}

td.selected::after {
  content: "";
  position: absolute;
  left: -3px;
  bottom: -3px;
  width: 5px;
  height: 5px;
  background-color: #217346;
  border: 1px solid #fff;
  border-width: 1px 1px 0 0;
}

/* Sheet tabs */
.sheetbar {
  display: flex;
  align-items: center;
  height: 24px;
  padding-left: 17px;
}

.hscroll {
  display: flex;
  width: 38.5%;
  background-color: #d9d9d9;
}

.hscroll .thumb {
  flex: 1;
  margin-left: 36px;
}

.hscroll button {
  width: 13px;
  height: 13px;
}

.sheetbar .grip {
  margin-left: 12px;
}

.add {
  margin-left: auto;
}

.sheet-tab {
  align-self: flex-start;
  height: 21px;
  margin-left: 29px;
  padding: 4px 10px;
  background-color: #fff;
  border: 1px solid #ababab;
  border-top: 0;
  border-bottom: 2px solid #217346;
  color: #217346;
  font-weight: 700;
}

.sheet-arrows {
  display: flex;
  gap: 17px;
  padding: 0 22px 0 29px;
  opacity: 0.3;
}

/* Status bar */
.status {
  display: flex;
  align-items: center;
  height: 18px;
  padding: 0 7px;
  gap: 16px;
  background-color: #f1f1f1;
  border-top: 1px solid #d2d2d2;
}

.views {
  display: flex;
  margin-left: auto;
}

.views button {
  width: 32px;
  height: 17px;
}

.views .on {
  background-color: #c6c6c6;
}

.zoom {
  display: flex;
  align-items: center;
  gap: 4px;
  margin-left: -14px;
}

.zoom button {
  width: 8px;
  font-size: 13px;
  font-weight: 700;
}

.zoom input {
  width: 80px;
  height: 10px;
  appearance: none;
  background: linear-gradient(#999, #999) center / 100% 1px no-repeat;
}

.zoom input::-webkit-slider-thumb {
  appearance: none;
  width: 4px;
  height: 10px;
  background-color: #666;
}

.percent-text {
  margin-left: -7px;
}

/* Taskbar */
.taskbar {
  display: flex;
  height: 25px;
  background-color: #101010;
  color: #fff;
}

.system,
.apps,
.tray {
  display: flex;
}

.system button,
.apps button {
  width: 30px;
  height: 25px;
}

.apps {
  gap: 1px;
  margin-left: 2px;
}

.apps .open {
  background: linear-gradient(#f3dc9b, #f3dc9b) center bottom / 23px 2px no-repeat;
}

.apps .focused {
  background-color: #333;
  background-size: 28px 2px;
}

.tray {
  align-items: center;
  gap: 8px;
  margin-left: auto;
  margin-right: 2px;
  padding-right: 17px;
  border-right: 1px solid #555;
}

.tray .news {
  gap: 7px;
}

.tray time {
  margin: 0 9px 0 4px;
}

/* Watermark over the lower part of the window */
.watermark {
  position: absolute;
  left: 0;
  right: 0;
  bottom: 16px;
  display: flex;
  flex-direction: column;
  align-items: center;
  color: #8c8c8c;
  opacity: 0.3;
  pointer-events: none;
  font-family: "Liberation Sans", "DejaVu Sans", sans-serif;
  font-weight: 700;
}

.watermark strong {
  font-size: 56px;
  line-height: 66px;
}

.watermark span {
  font-size: 31px;
  line-height: 34px;
}
```
